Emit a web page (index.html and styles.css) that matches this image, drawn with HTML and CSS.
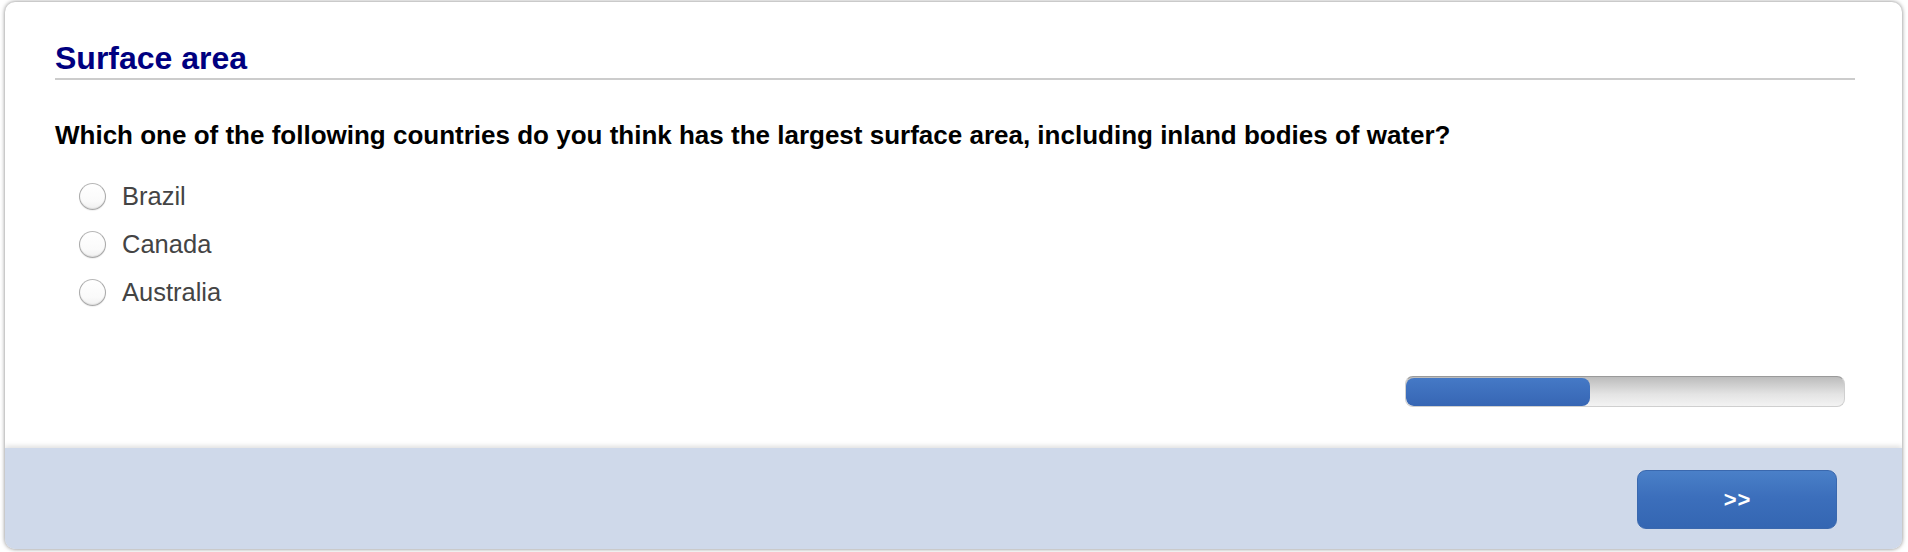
FILE: index.html
```html
<!DOCTYPE html>
<html lang="en">
<head>
<meta charset="utf-8">
<title>Surface area</title>
<link rel="stylesheet" href="styles.css">
</head>
<body>
<div class="card">
  <div class="main">
    <h1 class="title">Surface area</h1>
    <p class="question">Which one of the following countries do you think has the largest surface area, including inland bodies of water?</p>
    <ul class="options">
      <li class="option"><span class="radio"></span><span class="label">Brazil</span></li>
      <li class="option"><span class="radio"></span><span class="label">Canada</span></li>
      <li class="option"><span class="radio"></span><span class="label">Australia</span></li>
    </ul>
    <div class="progress-row">
      <div class="progress"><div class="progress-fill" style="width: 42%"></div></div>
    </div>
  </div>
  <div class="footer">
    <button class="next" type="button">&gt;&gt;</button>
  </div>
</div>
</body>
</html>
```
FILE: styles.css
```css
html, body {
  margin: 0;
  padding: 0;
  background: #fff;
}
body {
  font-family: "Liberation Sans", Arial, sans-serif;
}
.card {
  margin: 2px 6px 3px 5px;
  height: 547px;
  border-radius: 10px;
  background: #fff;
  box-shadow: 0 0 4px rgba(0, 0, 0, 0.5);
  overflow: hidden;
  display: flex;
  flex-direction: column;
}
.main {
  flex: 1;
  padding: 38px 47px 0 50px;
  display: flex;
  flex-direction: column;
}
.title {
  margin: 0;
  font-size: 32px;
  line-height: 36px;
  font-weight: 700;
  color: #000080;
  padding-bottom: 2px;
  border-bottom: 2px solid #cccccc;
}
.question {
  margin: 40px 0 0;
  font-size: 26px;
  line-height: 30px;
  font-weight: 700;
  color: #000;
}
.options {
  list-style: none;
  margin: 22px 0 0 24px;
  padding: 0;
}
.option {
  height: 48px;
  display: flex;
  align-items: center;
  gap: 16px;
  font-size: 25.5px;
  line-height: 30px;
  color: #444;
}
.label {
  position: relative;
  top: 0;
}
.radio {
  width: 25px;
  height: 25px;
  border-radius: 50%;
  border: 1px solid #a9a9a9;
  border-top-color: #b8b8b8;
  background: linear-gradient(#ffffff, #fafafa 70%, #f0f0f0);
  box-shadow: inset 0 -1px 1px rgba(0, 0, 0, 0.08), 0 1px 1px rgba(0, 0, 0, 0.06);
  flex: none;
}
.progress-row {
  margin-top: 60px;
  display: flex;
  justify-content: flex-end;
  padding-right: 10px;
}
.progress {
  width: 438px;
  height: 29px;
  border: 1px solid #cfcfcf;
  border-top-color: #9a9a9a;
  border-radius: 8px;
  background: linear-gradient(#bcbcbc, #e4e4e4 60%, #f3f3f3);
  overflow: hidden;
}
.progress-fill {
  height: 28px;
  margin-top: 1px;
  border-radius: 8px;
  background: linear-gradient(#4579c6, #3766b4);
}
.footer {
  height: 101px;
  box-sizing: border-box;
  background: #cfd9ea;
  box-shadow: 0 -2px 5px rgba(0, 0, 0, 0.13);
  padding: 22px 65px 0 0;
  display: flex;
  justify-content: flex-end;
  align-items: flex-start;
}
.next {
  width: 200px;
  height: 59px;
  border: 1px solid #3a68ae;
  border-radius: 9px;
  background: linear-gradient(#4a80c8, #3c6fbc 45%, #3466b2);
  color: #fff;
  font-family: "Liberation Sans", Arial, sans-serif;
  font-size: 22px;
  font-weight: 700;
  letter-spacing: 1px;
  padding: 0 0 0 1px;
  cursor: pointer;
}
```
